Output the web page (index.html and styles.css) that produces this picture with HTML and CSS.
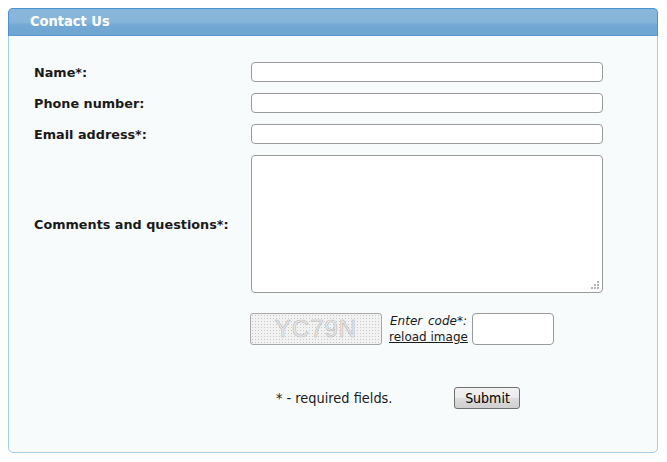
FILE: index.html
```html
<!DOCTYPE html>
<html>
<head>
<meta charset="utf-8">
<link rel="stylesheet" href="styles.css">
</head>
<body>
<div class="panel">
  <div class="header"><span class="title">Contact Us</span></div>
  <form class="form">
    <label class="label" for="name">Name*:</label>
    <input class="field" id="name" type="text">
    <label class="label" for="phone">Phone number:</label>
    <input class="field" id="phone" type="text">
    <label class="label" for="email">Email address*:</label>
    <input class="field" id="email" type="text">
    <label class="label" for="comments">Comments and questions*:</label>
    <div class="area-wrap">
      <textarea class="area" id="comments"></textarea>
      <svg class="grip" width="10" height="10" viewBox="0 0 10 10">
        <rect x="7" y="1" width="2" height="2" fill="#b4b4b4"/>
        <rect x="4" y="4" width="2" height="2" fill="#b4b4b4"/>
        <rect x="7" y="4" width="2" height="2" fill="#b4b4b4"/>
        <rect x="1" y="7" width="2" height="2" fill="#b4b4b4"/>
        <rect x="4" y="7" width="2" height="2" fill="#b4b4b4"/>
        <rect x="7" y="7" width="2" height="2" fill="#b4b4b4"/>
      </svg>
    </div>
    <span></span>
    <div class="captcha-row">
      <div class="captcha"><span class="captcha-text">YC79N</span></div>
      <div class="captcha-info">
        <span class="enter">Enter code*:</span>
        <a class="reload" href="#">reload image</a>
      </div>
      <input class="code" type="text">
    </div>
    <div class="footer">
      <span class="req">* - required fields.</span>
      <button class="submit" type="button">Submit</button>
    </div>
  </form>
</div>
</body>
</html>
```
FILE: styles.css
```css
body {
  margin: 8px;
  background: #ffffff;
  font-family: "DejaVu Sans", Verdana, sans-serif;
}
.panel {
  width: 650px;
  height: 445px;
  box-sizing: border-box;
  border: 1px solid #a6cce6;
  border-radius: 5px;
  background: #f8fbfb;
}
.header {
  margin: -1px -1px 0 -1px;
  height: 28px;
  box-sizing: border-box;
  border: 1px solid #4b92d3;
  border-bottom: 1px solid #5e9bd0;
  border-radius: 5px 5px 0 0;
  background: linear-gradient(to bottom, #89b7db 0%, #86b5da 50%, #72a8d3 62%, #6ea5d1 100%);
  padding-left: 21px;
}
.title {
  color: #ffffff;
  font-family: "DejaVu Sans Condensed", "DejaVu Sans", sans-serif;
  font-weight: bold;
  font-size: 14.5px;
  line-height: 25px;
}
.form {
  display: grid;
  grid-template-columns: 217px 352px;
  row-gap: 11px;
  padding: 26px 0 0 25px;
  align-items: center;
}
.label {
  font-weight: bold;
  font-size: 12.8px;
  color: #1a1a1a;
}
.field {
  height: 20px;
  box-sizing: border-box;
  border: 1px solid #9a9a9a;
  border-radius: 4px;
  background: #fff;
  margin: 0;
}
.area-wrap {
  position: relative;
  height: 138px;
}
.area {
  display: block;
  width: 100%;
  height: 138px;
  box-sizing: border-box;
  border: 1px solid #9a9a9a;
  border-radius: 4px;
  background: #fff;
  margin: 0;
  resize: none;
}
.grip {
  position: absolute;
  right: 3px;
  bottom: 3px;
}
.captcha-row {
  display: flex;
  align-items: center;
  margin-top: 9px;
  margin-left: -1px;
}
.captcha {
  width: 132px;
  height: 32px;
  box-sizing: border-box;
  border: 1px solid #a8a8a8;
  border-radius: 3px;
  background-color: #f2f2f2;
  background-image: radial-gradient(circle, #c8c8c8 0.7px, transparent 0.9px);
  background-size: 3px 3px;
  display: flex;
  align-items: center;
  justify-content: center;
}
.captcha-text {
  font-family: "Liberation Sans", Arial, sans-serif;
  font-size: 24px;
  color: #ececec;
  letter-spacing: 1px;
  -webkit-text-stroke: 0.6px #b8b8b8;
}
.captcha-info {
  display: flex;
  flex-direction: column;
  margin-left: 7px;
  font-size: 12px;
  line-height: 16px;
}
.enter {
  font-style: italic;
  color: #1a1a1a;
  padding-left: 1px;
  word-spacing: 2px;
}
.reload {
  color: #1a1a1a;
  text-decoration: underline;
}
.code {
  width: 82px;
  height: 32px;
  box-sizing: border-box;
  border: 1px solid #9a9a9a;
  border-radius: 4px;
  background: #fff;
  margin: 0 0 0 4px;
}
.footer {
  grid-column: 1 / 3;
  display: flex;
  align-items: center;
  margin-top: 31px;
  padding-left: 242px;
}
.req {
  font-family: "DejaVu Sans Condensed", "DejaVu Sans", sans-serif;
  font-size: 14.4px;
  color: #1a1a1a;
}
.submit {
  margin-left: 62px;
  width: 66px;
  height: 22px;
  box-sizing: border-box;
  border: 1px solid #707070;
  border-radius: 3px;
  background: linear-gradient(to bottom, #f2f2f2 0%, #ebebeb 50%, #dddddd 51%, #cfcfcf 100%);
  font-family: "DejaVu Sans Condensed", "DejaVu Sans", sans-serif;
  font-size: 14px;
  color: #000;
  padding: 0;
}
```
